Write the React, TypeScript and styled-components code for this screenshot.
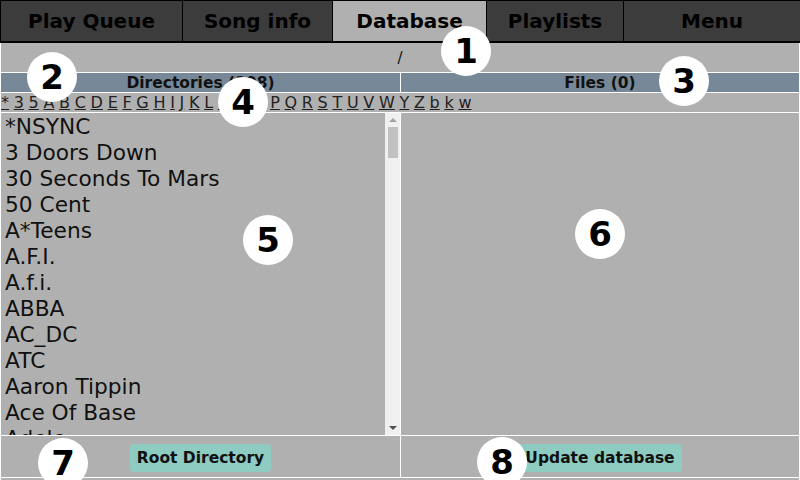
import React from "react";
import styled, { createGlobalStyle } from "styled-components";

const Global = createGlobalStyle`
  html, body { margin: 0; padding: 0; background: #ffffff; }
  body { font-family: "DejaVu Sans", "Liberation Sans", sans-serif; }
  * { box-sizing: border-box; }
`;

const Screen = styled.div`
  position: relative;
  width: 800px;
  height: 480px;
  overflow: hidden;
  background: #ffffff;
  font-family: "DejaVu Sans", "Liberation Sans", sans-serif;
`;

const TabBar = styled.div`
  display: grid;
  grid-template-columns: 182px 150px 154px 137px 1fr;
  height: 43px;
  background: #3c3c3c;
  border-top: 1px solid #000;
  border-left: 1px solid #000;
  border-bottom: 2px solid #000;
`;

const Tab = styled.div<{ $active?: boolean }>`
  display: flex;
  align-items: center;
  justify-content: center;
  border-right: 1px solid #000;
  background: ${(p) => (p.$active ? "#b0b0b0" : "#3c3c3c")};
  color: #000;
  font-weight: bold;
  font-size: 20px;
  &:last-child { border-right: none; }
`;

const Body = styled.div`
  display: grid;
  grid-template-columns: 399px 398px;
  grid-template-rows: 29px 19px 19px 322px 41px 1fr;
  column-gap: 1px;
  row-gap: 1px;
  padding: 0 1px;
  height: 437px;
  background: #ffffff;
`;

const PathRow = styled.div`
  grid-column: 1 / span 2;
  background: #b0b0b0;
  display: flex;
  align-items: center;
  justify-content: center;
  font-size: 15px;
  color: #111;
`;

const Header = styled.div`
  background: #778899;
  display: flex;
  align-items: center;
  justify-content: center;
  font-size: 15.5px;
  font-weight: bold;
  color: #111;
`;

const Letters = styled.div`
  grid-column: 1 / span 2;
  background: #b0b0b0;
  font-size: 16px;
  line-height: 19px;
  white-space: nowrap;
  color: #222;
`;

const Letter = styled.a`
  color: #222;
  text-decoration: underline;
  margin-right: 4.7px;
`;

const ListCell = styled.div`
  background: #b0b0b0;
  display: flex;
  overflow: hidden;
`;

const List = styled.div`
  flex: 1;
  overflow: hidden;
  padding-left: 4px;
  padding-top: 1px;
`;

const Item = styled.div`
  font-size: 21.7px;
  line-height: 26px;
  color: #111;
  white-space: nowrap;
`;

const Scrollbar = styled.div`
  width: 15px;
  background: #f0f0f0;
  display: flex;
  flex-direction: column;
  align-items: center;
`;

const Arrow = styled.div<{ $down?: boolean; $color: string }>`
  width: 0;
  height: 0;
  border-left: 4px solid transparent;
  border-right: 4px solid transparent;
  ${(p) =>
    p.$down
      ? `border-top: 4px solid ${p.$color}; margin-top: auto; margin-bottom: 5px;`
      : `border-bottom: 4px solid ${p.$color}; margin-top: 5px;`}
`;

const Thumb = styled.div`
  width: 10px;
  height: 31px;
  margin-top: 5px;
  background: #c1c1c1;
`;

const EmptyCell = styled.div`
  background: #b0b0b0;
`;

const ButtonCell = styled.div`
  background: #b0b0b0;
  display: flex;
  align-items: center;
  justify-content: center;
`;

const ActionButton = styled.div`
  background: #8ecbc0;
  border-radius: 4px;
  height: 28px;
  padding: 0 7px;
  display: flex;
  align-items: center;
  font-size: 15.5px;
  font-weight: bold;
  color: #111;
  margin-top: 3px;
`;

const FooterFill = styled.div`
  grid-column: 1 / span 2;
  background: #b0b0b0;
`;

const Badge = styled.div`
  position: absolute;
  width: 50px;
  height: 50px;
  margin-left: -25px;
  margin-top: -25px;
  border-radius: 50%;
  background: #ffffff;
  display: flex;
  align-items: center;
  justify-content: center;
  font-family: "DejaVu Sans", sans-serif;
  font-weight: bold;
  font-size: 34px;
  color: #000;
`;

const tabs = ["Play Queue", "Song info", "Database", "Playlists", "Menu"];
const letters = "* 3 5 A B C D E F G H I J K L M N O P Q R S T U V W Y Z b k w".split(" ");
const dirs = [
  "*NSYNC",
  "3 Doors Down",
  "30 Seconds To Mars",
  "50 Cent",
  "A*Teens",
  "A.F.I.",
  "A.f.i.",
  "ABBA",
  "AC_DC",
  "ATC",
  "Aaron Tippin",
  "Ace Of Base",
  "Adele",
];
const badges: [number, number, number][] = [
  [1, 466, 51],
  [2, 52, 77],
  [3, 684, 81],
  [4, 243, 102],
  [5, 268, 240],
  [6, 600, 234],
  [7, 63, 463],
  [8, 502, 462],
];

export default function App() {
  return (
    <Screen>
      <Global />
      <TabBar>
        {tabs.map((t) => (
          <Tab key={t} $active={t === "Database"}>
            {t}
          </Tab>
        ))}
      </TabBar>
      <Body>
        <PathRow>/</PathRow>
        <Header>Directories (398)</Header>
        <Header>Files (0)</Header>
        <Letters>
          {letters.map((l, i) => (
            <Letter key={i}>{l}</Letter>
          ))}
        </Letters>
        <ListCell>
          <List>
            {dirs.map((d) => (
              <Item key={d}>{d}</Item>
            ))}
          </List>
          <Scrollbar>
            <Arrow $color="#a3a3a3" />
            <Thumb />
            <Arrow $down $color="#505050" />
          </Scrollbar>
        </ListCell>
        <EmptyCell />
        <ButtonCell>
          <ActionButton>Root Directory</ActionButton>
        </ButtonCell>
        <ButtonCell>
          <ActionButton>Update database</ActionButton>
        </ButtonCell>
        <FooterFill />
      </Body>
      {badges.map(([n, x, y]) => (
        <Badge key={n} style={{ left: x, top: y }}>
          {n}
        </Badge>
      ))}
    </Screen>
  );
}
